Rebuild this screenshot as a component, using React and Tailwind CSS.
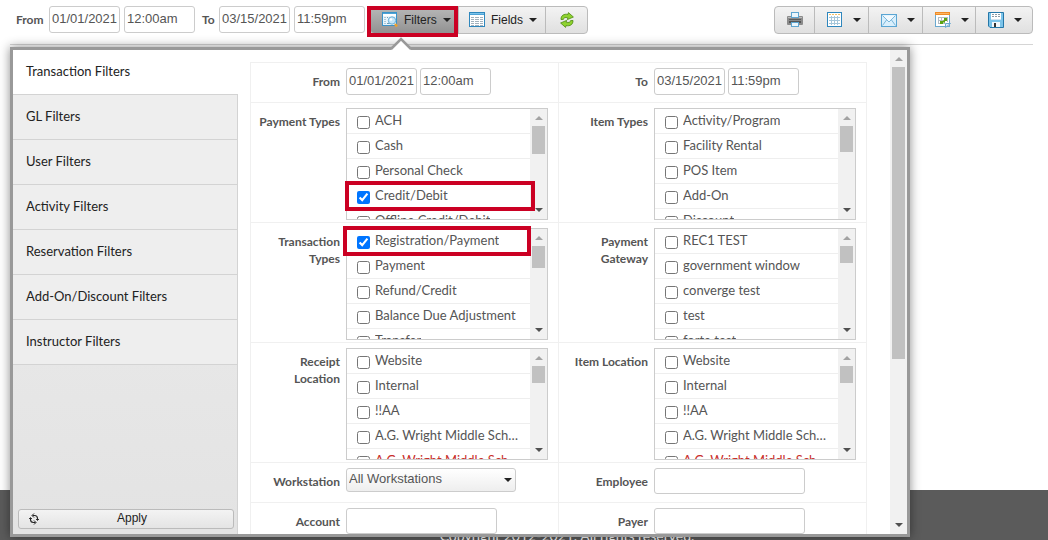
import React from "react";

const NAV = [
  "Transaction Filters",
  "GL Filters",
  "User Filters",
  "Activity Filters",
  "Reservation Filters",
  "Add-On/Discount Filters",
  "Instructor Filters",
];

const SCHOOLS = [
  "Website",
  "Internal",
  "!!AA",
  "A.G. Wright Middle School",
  { text: "A.G. Wright Middle School", red: true },
];

function Caret() {
  return (
    <svg width="8" height="4" viewBox="0 0 8 4" className="shrink-0" aria-hidden="true">
      <path d="M0 0h8L4 4z" fill="#222" />
    </svg>
  );
}

function FiltersIcon() {
  return (
    <svg width="16" height="16" viewBox="0 0 16 16" className="shrink-0" aria-hidden="true">
      <rect x="0.5" y="0.5" width="14" height="13" fill="#e9f5fc" stroke="#3b93c8" />
      <path d="M1 1.500h13" stroke="#4da3d6" />
      <path d="M1 3h13" stroke="#fff" strokeWidth="2" />
      <path d="M2.500 5.500h1M2.500 7.500h1M2.500 9.500h1M2.500 11.500h1M5 5.500h1M5 11.500h3" stroke="#6f9cb5" />
      <circle cx="10" cy="8.500" r="3.700" fill="#c4e6fa" stroke="#6aaed6" />
      <circle cx="9" cy="7.500" r="1.300" fill="#fff" />
      <path d="M13 12l2 2.500" stroke="#efa02b" strokeWidth="2.400" />
    </svg>
  );
}

function FieldsIcon() {
  return (
    <svg width="16" height="16" viewBox="0 0 16 16" className="shrink-0" aria-hidden="true">
      <rect x="0.500" y="0.500" width="15" height="14" fill="#fff" stroke="#2f87bd" />
      <path d="M1 1.500h14" stroke="#7cc3ea" />
      <path d="M1 2.500h14" stroke="#4da3d6" />
      <path
        d="M2 5.500h3M6 5.500h4M11 5.500h3M2 7.500h3M6 7.500h4M11 7.500h3M2 9.500h3M6 9.500h4M11 9.500h3M2 11.500h3M6 11.500h4M11 11.500h3M2 13.500h3M6 13.500h4M11 13.500h3"
        stroke="#a3b1bc"
      />
    </svg>
  );
}

function RefreshIcon() {
  return (
    <svg width="16" height="16" viewBox="0 0 16 16" className="shrink-0" aria-hidden="true">
      <g stroke="#4c8a12" strokeWidth="0.800" fill="#8fd32f" strokeLinejoin="round">
        <path d="M2 7.500C1.800 3.500 5 1.600 9 2.400L9.400 0.600 14.400 5 8.400 7.600 8.800 5.800C6.200 5 4.600 5.800 4.400 7.400z" />
        <path d="M14 8.500C14.200 12.500 11 14.400 7 13.600L6.600 15.400 1.600 11 7.600 8.400 7.200 10.200C9.800 11 11.400 10.200 11.600 8.600z" />
      </g>
    </svg>
  );
}

function PrintIcon() {
  return (
    <svg width="16" height="16" viewBox="0 0 16 16" className="shrink-0" aria-hidden="true">
      <rect x="0" y="4" width="16" height="9" rx="1" fill="#8b8b8b" />
      <path d="M1 5.500h14" stroke="#bdbdbd" />
      <path d="M2 7.500h12" stroke="#5c5c5c" />
      <rect x="2" y="9" width="12" height="2" fill="#555" />
      <rect x="4.500" y="0.500" width="7" height="5" fill="#eaf6fd" stroke="#5fa6d1" />
      <rect x="4.500" y="10.500" width="7" height="4" fill="#eaf6fd" stroke="#5fa6d1" />
    </svg>
  );
}

function TableIcon() {
  return (
    <svg width="16" height="16" viewBox="0 0 16 16" className="shrink-0" aria-hidden="true">
      <rect x="0.500" y="0.500" width="14" height="14" fill="#fff" stroke="#2f87bd" />
      <path d="M2 2.500h11" stroke="#f4c063" strokeDasharray="2 1" />
      <path d="M4.500 4v9M7.500 4v9M10.500 4v9M2 5.500h11M2 8.500h11M2 11.500h11" stroke="#a5c6da" />
    </svg>
  );
}

function MailIcon() {
  return (
    <svg width="16" height="13" viewBox="0 0 16 13" className="shrink-0" aria-hidden="true">
      <rect x="0.500" y="0.500" width="15" height="12" fill="#d9effc" stroke="#5aa5d3" />
      <path d="M1.500 1.500L8 8l6.500-6.500z" fill="#f1f9fe" />
      <path d="M1.500 1.500L8 8l6.500-6.500M1.500 11.500L5.500 6M14.500 11.500L10.500 6" fill="none" stroke="#7ab6da" />
    </svg>
  );
}

function CalendarIcon() {
  return (
    <svg width="16" height="16" viewBox="0 0 16 16" className="shrink-0" aria-hidden="true">
      <rect x="0.500" y="1.500" width="14" height="13" fill="#fff" stroke="#6aa9cf" />
      <rect x="0" y="0" width="15" height="3" fill="#f08c28" />
      <path d="M1 1.500h13" stroke="#fbb564" />
      <path d="M3 5.500h10M3 8.500h10M3 11.500h7M3.500 5v7M6.500 5v7M9.500 5v7M12.500 5v5" stroke="#b3bcc2" />
      <path d="M9 6h3v3H9zM5 9h3v3H5zM8 8.500h2v2H8z" fill="#5ba413" />
      <path d="M10.500 15.500v-4h5z" fill="#d9ecf7" stroke="#6aa9cf" />
    </svg>
  );
}

function SaveIcon() {
  return (
    <svg width="16" height="16" viewBox="0 0 16 16" className="shrink-0" aria-hidden="true">
      <path d="M0.500 0.500h15v15H2l-1.500-1.500z" fill="#7cc4ea" stroke="#2577a8" />
      <rect x="3" y="1" width="10" height="7" fill="#fff" />
      <path d="M4 2.500h8M4 4.500h8" stroke="#8a9aa4" strokeDasharray="2 1" />
      <path d="M3 7.500h10" stroke="#cfe4ef" />
      <rect x="4" y="10" width="8" height="5" fill="#f3f8fb" />
      <rect x="6" y="11" width="2" height="4" fill="#333" />
    </svg>
  );
}

function ApplyIcon() {
  return (
    <svg width="10" height="12" viewBox="0 0 10 12" fill="none" stroke="#222" aria-hidden="true">
      <path d="M3.500 2.500h2A3 3 0 0 1 8.500 5.500v1.500M6.500 9.500h-2A3 3 0 0 1 1.500 6.500V5" strokeWidth="1.100" />
      <path d="M5 0.500L3 2.500 5 4.500M5 7.500L7 9.500 5 11.500" />
      <path d="M7 6l1.500 1.500L10 6M0 6l1.500-1.500L3 6" strokeWidth="0.900" />
    </svg>
  );
}

function Scrollbar({ thumb }) {
  return (
    <div className="flex w-[17px] shrink-0 flex-col items-center bg-[#f1f1f1]" aria-hidden="true">
      <div className="flex h-[17px] shrink-0 items-center">
        <svg width="8" height="4" viewBox="0 0 8 4">
          <path d="M0 4h8L4 0z" fill="#a3a3a3" />
        </svg>
      </div>
      <div className={"w-[13px] bg-[#c1c1c1] " + thumb} />
      <div className="mt-auto flex h-[17px] shrink-0 items-start pt-[6px]">
        <svg width="8" height="4" viewBox="0 0 8 4">
          <path d="M0 0h8L4 4z" fill="#505050" />
        </svg>
      </div>
    </div>
  );
}

function DateTime({ label, date, time, gap }) {
  const box =
    "h-[27px] w-[71px] rounded-[3px] border border-[#ccc] bg-white pb-[3px] pl-[2px] font-['Liberation_Sans',sans-serif] text-[13px] text-[#555] outline-none";
  return (
    <div className={"flex " + gap}>
      <input className={box} defaultValue={date} aria-label={label + " date"} />
      <input className={box} defaultValue={time} aria-label={label + " time"} />
    </div>
  );
}

function Cell({ label, htmlFor, tall, children }) {
  return (
    <div className={"flex border-t border-l border-[#f0f0f0] pt-[5px] " + (tall ? "h-[120px]" : "h-10")}>
      <label
        htmlFor={htmlFor}
        className="w-[95px] shrink-0 pt-[5px] pr-[6px] pl-1 text-right text-[12px] leading-[17px] font-bold text-[#555]"
      >
        {label}
      </label>
      {children}
    </div>
  );
}

function CheckList({ label, items, checked, thumb, mark }) {
  return (
    <Cell label={label} tall>
      <div className="relative h-[112px] w-[202px]">
        <div className="flex h-full border border-[#ccc]" role="group" aria-label={label}>
          <ul className="min-w-0 flex-1 overflow-hidden">
            {items.map((item, i) => (
              <li key={i} className="h-[25px] border-b border-[#eee]">
                <label
                  className={
                    "flex h-6 items-center gap-[5px] pr-2 pl-[10px] text-[13px] " +
                    (item.red ? "text-[#c9302c]" : "text-[#555]")
                  }
                >
                  <input
                    type="checkbox"
                    className="mt-[3px] size-[13px] shrink-0"
                    defaultChecked={item === checked}
                  />
                  <span className="truncate">{item.text || item}</span>
                </label>
              </li>
            ))}
          </ul>
          <Scrollbar thumb={thumb} />
        </div>
        {mark && <div className={"pointer-events-none absolute border-4 border-[#cb0023] " + mark} />}
      </div>
    </Cell>
  );
}

const TOOL =
  "flex h-full items-center border-r border-[#bbb] font-['Liberation_Sans',sans-serif] text-[12px] text-[#222] last:border-r-0";
const GROUP =
  "flex h-7 overflow-hidden rounded-[4px] border border-[#bbb] bg-linear-to-b from-[#f3f3f3] to-[#e0e0e0]";
const FIELD =
  "h-[26px] w-[151px] rounded-[3px] border border-[#ccc] bg-white px-1 text-[13px] text-[#555] outline-none";
const BAR_LABEL = "pt-[5px] text-[12px] leading-[17px] font-bold text-[#555]";

export default function App() {
  return (
    <div className="relative flex min-h-screen flex-col bg-white font-['Lato',sans-serif]">
      <header className="mr-[15px] ml-[10px] flex h-[45px] items-start border-b border-[#d5d5d5] pt-[6px]">
        <span className={"w-[39px] pl-[6px] " + BAR_LABEL}>From</span>
        <DateTime label="From" date="01/01/2021" time="12:00am" gap="gap-1" />
        <span className={"w-6 pl-[7px] " + BAR_LABEL}>To</span>
        <DateTime label="To" date="03/15/2021" time="11:59pm" gap="gap-1" />
        <div className="relative ml-[5px]">
          <div className={GROUP}>
            <button
              type="button"
              className={TOOL + " w-[88px] gap-[6px] bg-linear-to-b from-[#b8b8b8] to-[#929292] pl-[11px]"}
            >
              <FiltersIcon />
              <span>Filters</span>
              <Caret />
            </button>
            <button type="button" className={TOOL + " w-[87px] gap-[6px] pl-[10px]"}>
              <FieldsIcon />
              <span>Fields</span>
              <Caret />
            </button>
            <button type="button" aria-label="Refresh" className={TOOL + " w-[41px] justify-center"}>
              <RefreshIcon />
            </button>
          </div>
          <div className="pointer-events-none absolute top-0 -left-[3px] h-[31px] w-[91px] border-4 border-[#cb0023]" />
        </div>
        <div className={GROUP + " ml-auto"}>
          <button type="button" aria-label="Print" className={TOOL + " w-10 justify-center"}>
            <PrintIcon />
          </button>
          <button type="button" aria-label="Table" className={TOOL + " w-[54px] gap-[10px] pl-3"}>
            <TableIcon />
            <Caret />
          </button>
          <button type="button" aria-label="Email" className={TOOL + " w-[54px] gap-[10px] pl-3"}>
            <MailIcon />
            <Caret />
          </button>
          <button type="button" aria-label="Schedule" className={TOOL + " w-[53px] gap-[10px] pl-3"}>
            <CalendarIcon />
            <Caret />
          </button>
          <button type="button" aria-label="Save" className={TOOL + " w-[56px] gap-[10px] pl-3"}>
            <SaveIcon />
            <Caret />
          </button>
        </div>
      </header>

      <main className="flex-1" />

      <footer className="flex h-[50px] justify-center overflow-hidden bg-[#5b5b5b] pt-9 pl-[86px] text-[14px] leading-5 text-white">
        Copyright 2012-2021. All rights reserved.
      </footer>

      <section
        aria-label="Filters"
        className="absolute top-[47px] right-[138px] bottom-[3px] left-[10px] flex border-[3px] border-[#999] bg-white shadow-[0_0_10px_rgba(0,0,0,0.45)]"
      >
        <svg
          width="22"
          height="14"
          viewBox="0 0 22 14"
          className="absolute -top-[14px] left-[377px]"
          aria-hidden="true"
        >
          <path d="M1 14L11 4l10 10z" fill="#fff" />
          <path d="M1 13L11 3l10 10" fill="none" stroke="#999" strokeWidth="2.500" />
        </svg>
        <div className="flex w-[225px] shrink-0 flex-col bg-linear-to-b from-[#eee] to-[#e3e3e3]">
          <nav>
            {NAV.map((name, i) => (
              <a
                key={name}
                href="#"
                className={
                  "flex h-[45px] items-center border-b border-[#d3d3d3] pl-[13px] text-[13px] text-[#222] " +
                  (i === 0 ? "bg-white" : "border-r bg-[#eee]")
                }
              >
                {name}
              </a>
            ))}
          </nav>
          <div className="flex flex-1 items-end border-r border-[#d3d3d3] pr-[3px] pb-[5px] pl-[5px]">
            <button
              type="button"
              className="flex h-5 w-full items-center rounded-[3px] border border-[#bbb] bg-linear-to-b from-[#f3f3f3] to-[#e4e4e4] pl-[10px] font-['Liberation_Sans',sans-serif] text-[12px] text-[#222]"
            >
              <ApplyIcon />
              <span className="flex-1 pr-[8px] pb-[2px]">Apply</span>
            </button>
          </div>
        </div>

        <div className="min-w-0 flex-1 overflow-hidden pt-3 pr-[23px] pl-3">
          <div className="grid grid-cols-2 border-r border-[#f0f0f0]">
            <Cell label="From">
              <DateTime label="From" date="01/01/2021" time="12:00am" gap="gap-[3px]" />
            </Cell>
            <Cell label="To">
              <DateTime label="To" date="03/15/2021" time="11:59pm" gap="gap-[3px]" />
            </Cell>
            <CheckList
              label="Payment Types"
              items={["ACH", "Cash", "Personal Check", "Credit/Debit", "Offline Credit/Debit"]}
              checked="Credit/Debit"
              thumb="h-7"
              mark="top-[73px] -left-px h-[30px] w-[190px]"
            />
            <CheckList
              label="Item Types"
              items={["Activity/Program", "Facility Rental", "POS Item", "Add-On", "Discount"]}
              thumb="h-[26px]"
            />
            <CheckList
              label="Transaction Types"
              items={["Registration/Payment", "Payment", "Refund/Credit", "Balance Due Adjustment", "Transfer"]}
              checked="Registration/Payment"
              thumb="h-[22px]"
              mark="-top-[2px] -left-[3px] h-[30px] w-[188px]"
            />
            <CheckList
              label="Payment Gateway"
              items={["REC1 TEST", "government window", "converge test", "test", "forte test"]}
              thumb="h-[17px]"
            />
            <CheckList label="Receipt Location" items={SCHOOLS} thumb="h-[17px]" />
            <CheckList label="Item Location" items={SCHOOLS} thumb="h-[17px]" />
            <Cell label="Workstation" htmlFor="workstation">
              <div className="relative h-6 w-[170px]">
                <select
                  id="workstation"
                  className="block h-6 w-full appearance-none rounded-[3px] border border-[#ccc] bg-linear-to-b from-white to-[#eee] pb-1 pl-[2px] font-['Liberation_Sans',sans-serif] text-[13px] leading-[17px] text-[#555]"
                >
                  <option>All Workstations</option>
                </select>
                <span className="pointer-events-none absolute inset-y-0 right-1 flex items-center">
                  <Caret />
                </span>
              </div>
            </Cell>
            <Cell label="Employee" htmlFor="employee">
              <input id="employee" className={FIELD} />
            </Cell>
            <Cell label="Account" htmlFor="account">
              <input id="account" className={FIELD} />
            </Cell>
            <Cell label="Payer" htmlFor="payer">
              <input id="payer" className={FIELD} />
            </Cell>
          </div>
        </div>
        <Scrollbar thumb="h-[292px]" />
      </section>
    </div>
  );
}
